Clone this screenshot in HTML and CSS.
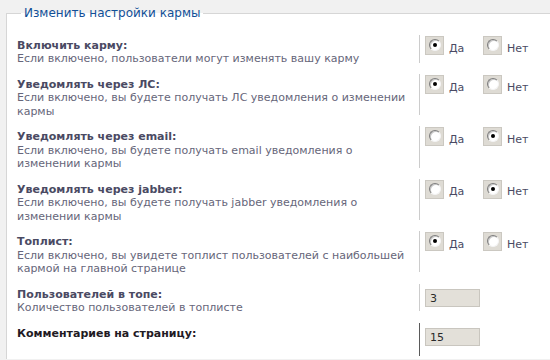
FILE: index.html
```html
<!DOCTYPE html>
<html lang="ru">
<head>
<meta charset="utf-8">
<title>Изменить настройки кармы</title>
<link rel="stylesheet" href="styles.css">
</head>
<body>
<form class="settings">
  <fieldset class="panel">
    <legend class="panel-title">Изменить настройки кармы</legend>

    <div class="row">
      <div class="row-label">
        <div class="row-title">Включить карму:</div>
        <div class="row-desc">Если включено, пользователи могут изменять вашу карму</div>
      </div>
      <div class="row-field">
        <label class="choice"><span class="radio is-checked"><span class="radio-dot"></span></span>Да</label>
        <label class="choice"><span class="radio"><span class="radio-dot"></span></span>Нет</label>
      </div>
    </div>

    <div class="row">
      <div class="row-label">
        <div class="row-title">Уведомлять через ЛС:</div>
        <div class="row-desc">Если включено, вы будете получать ЛС уведомления о изменении<br>кармы</div>
      </div>
      <div class="row-field">
        <label class="choice"><span class="radio is-checked"><span class="radio-dot"></span></span>Да</label>
        <label class="choice"><span class="radio"><span class="radio-dot"></span></span>Нет</label>
      </div>
    </div>

    <div class="row">
      <div class="row-label">
        <div class="row-title">Уведомлять через email:</div>
        <div class="row-desc">Если включено, вы будете получать email уведомления о<br>изменении кармы</div>
      </div>
      <div class="row-field">
        <label class="choice"><span class="radio"><span class="radio-dot"></span></span>Да</label>
        <label class="choice"><span class="radio is-checked"><span class="radio-dot"></span></span>Нет</label>
      </div>
    </div>

    <div class="row">
      <div class="row-label">
        <div class="row-title">Уведомлять через jabber:</div>
        <div class="row-desc">Если включено, вы будете получать jabber уведомления о<br>изменении кармы</div>
      </div>
      <div class="row-field">
        <label class="choice"><span class="radio"><span class="radio-dot"></span></span>Да</label>
        <label class="choice"><span class="radio is-checked"><span class="radio-dot"></span></span>Нет</label>
      </div>
    </div>

    <div class="row">
      <div class="row-label">
        <div class="row-title">Топлист:</div>
        <div class="row-desc">Если включено, вы увидете топлист пользователей с наибольшей<br>кармой на главной странице</div>
      </div>
      <div class="row-field">
        <label class="choice"><span class="radio is-checked"><span class="radio-dot"></span></span>Да</label>
        <label class="choice"><span class="radio"><span class="radio-dot"></span></span>Нет</label>
      </div>
    </div>

    <div class="row">
      <div class="row-label">
        <div class="row-title">Пользователей в топе:</div>
        <div class="row-desc">Количество пользователей в топлисте</div>
      </div>
      <div class="row-field row-field--input">
        <span class="textbox">3</span>
      </div>
    </div>

    <div class="row row--active">
      <div class="row-label">
        <div class="row-title">Комментариев на страницу:</div>
      </div>
      <div class="row-field row-field--input">
        <span class="textbox">15</span>
      </div>
    </div>
  </fieldset>
</form>
</body>
</html>
```

FILE: styles.css
```css
html, body {
  overflow: hidden;
}

body {
  margin: 0;
  padding-top: 6px;
  background: #f1f1f1;
  font-family: "DejaVu Sans", Verdana, sans-serif;
  font-size: 11px;
  line-height: 13.4px;
}

.settings {
  margin: 0;
}

.panel {
  margin: 0 0 0 6px;
  min-width: 0;
  padding: 14px 0 0 10px;
  border: 1px solid #d6d6d6;
  border-right: 0;
  border-bottom: 0;
  background: #ffffff;
}

.panel-title {
  margin-left: 4px;
  padding: 0 3px;
  font-size: 12px;
  line-height: 15px;
  color: #115098;
}

.row {
  display: grid;
  grid-template-columns: 402px 1fr;
  margin-bottom: 8.2px;
}

.row:last-child {
  margin-bottom: 0;
}

.row-label {
  padding-top: 4px;
}

.row-title {
  font-weight: bold;
  color: #4a4a63;
}

.row-desc {
  color: #66667a;
}

.row-field {
  display: flex;
  align-items: flex-start;
  margin-bottom: 3px;
  padding: 1px 0 0 5px;
  border-left: 1px solid #cccccc;
}

.row-field--input {
  padding-top: 5px;
}

.row--active .row-title {
  color: #221a24;
}

.row--active .row-field {
  border-left-color: #5a5a5a;
  padding-bottom: 10px;
}

.choice {
  display: flex;
  align-items: flex-end;
  width: 58px;
  color: #4a4a63;
}

.radio {
  display: block;
  box-sizing: border-box;
  width: 19px;
  height: 19px;
  margin-right: 5px;
  padding: 2px 0 0 3px;
  background: #dedbd4;
  border: 1px solid #cbc8c1;
}

.radio-dot {
  display: block;
  box-sizing: border-box;
  width: 12px;
  height: 12px;
  border-radius: 50%;
  background: #ffffff;
  border: 1px solid;
  border-color: #7c7c7c #f4f4f4 #f4f4f4 #7c7c7c;
  box-shadow: inset 1px 1px 0 #c8c8c8;
  position: relative;
}

.radio.is-checked .radio-dot::after {
  content: "";
  position: absolute;
  left: 3px;
  top: 3px;
  width: 4px;
  height: 4px;
  border-radius: 50%;
  background: #000000;
}

.textbox {
  display: block;
  box-sizing: border-box;
  width: 55px;
  height: 18px;
  padding: 2px 4px;
  background: #e3e0d9;
  border: 1px solid #c9c6bf;
  color: #2a2a2a;
  font-size: 11px;
  line-height: 13px;
}
```
